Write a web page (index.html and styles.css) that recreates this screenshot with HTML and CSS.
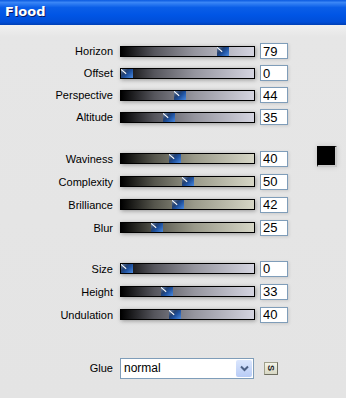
FILE: index.html
```html
<!DOCTYPE html>
<html lang="en">
<head>
    <meta charset="UTF-8">
    <title>Flood</title>
    <link rel="stylesheet" href="styles.css">
</head>
<body>
    <div class="titlebar">Flood</div>
    <div class="panel">
        <div class="group first">
            <div class="row"><span class="label">Horizon</span><div class="slider cool"><i class="thumb" style="--v:79"></i></div><input class="num" value="79"></div>
            <div class="row"><span class="label">Offset</span><div class="slider cool"><i class="thumb" style="--v:0"></i></div><input class="num" value="0"></div>
            <div class="row"><span class="label">Perspective</span><div class="slider cool"><i class="thumb" style="--v:44"></i></div><input class="num" value="44"></div>
            <div class="row"><span class="label">Altitude</span><div class="slider cool"><i class="thumb" style="--v:35"></i></div><input class="num" value="35"></div>
        </div>
        <div class="group second">
            <div class="row tall"><span class="label">Waviness</span><div class="slider warm"><i class="thumb" style="--v:40"></i></div><input class="num" value="40"><span class="swatch"></span></div>
            <div class="row tall"><span class="label">Complexity</span><div class="slider warm"><i class="thumb" style="--v:50"></i></div><input class="num" value="50"></div>
            <div class="row tall"><span class="label">Brilliance</span><div class="slider warm"><i class="thumb" style="--v:42"></i></div><input class="num" value="42"></div>
            <div class="row tall"><span class="label">Blur</span><div class="slider warm"><i class="thumb" style="--v:25"></i></div><input class="num" value="25"></div>
        </div>
        <div class="group third">
            <div class="row tall"><span class="label">Size</span><div class="slider cool"><i class="thumb" style="--v:0"></i></div><input class="num" value="0"></div>
            <div class="row tall"><span class="label">Height</span><div class="slider cool"><i class="thumb" style="--v:33"></i></div><input class="num" value="33"></div>
            <div class="row tall"><span class="label">Undulation</span><div class="slider cool"><i class="thumb" style="--v:40"></i></div><input class="num" value="40"></div>
        </div>
        <div class="row glue">
            <span class="label">Glue</span>
            <div class="select">
                <span class="select-text">normal</span>
                <span class="select-btn">
                    <svg width="9" height="7" viewBox="0 0 9 7"><path d="M1 1.5 L4.5 5 L8 1.5" fill="none" stroke="#4d6185" stroke-width="2"/></svg>
                </span>
            </div>
            <button class="sbtn"><span>S</span></button>
        </div>
    </div>
</body>
</html>
```

FILE: styles.css
```css
body {
    margin: 0;
    width: 346px;
    height: 398px;
    background: #e4e4e4;
    font-family: "Liberation Sans", Arial, sans-serif;
    font-size: 11px;
    color: #000;
    overflow: hidden;
}
.titlebar {
    height: 25px;
    line-height: 24px;
    padding-left: 5px;
    color: #fff;
    font-weight: bold;
    font-size: 13px;
    font-family: "DejaVu Sans", "Liberation Sans", sans-serif;
    text-shadow: 1px 1px 0 #0a1a66;
    background: linear-gradient(#0a5ae0 0%, #3a86f6 10%, #0a5ee8 30%, #0055e5 60%, #004ed8 88%, #003fb5 100%);
}
.panel {
    background: linear-gradient(#f0f0f0 0, #e6e6e6 12px, #e4e4e4 100%);
    height: 373px;
}
.group.first {
    padding-top: 15px;
}
.group.second {
    margin-top: 19px;
}
.group.third {
    margin-top: 18px;
}
.row {
    display: flex;
    align-items: center;
    height: 22px;
}
.row.tall {
    height: 23px;
}
.label {
    width: 113px;
    text-align: right;
    flex: none;
}
.slider {
    position: relative;
    box-sizing: border-box;
    width: 135px;
    height: 11px;
    margin-left: 7px;
    border: 1px solid #000;
    box-shadow: 1px 1px 4px rgba(0, 0, 0, 0.35);
}
.slider.cool {
    background: linear-gradient(to right, #000 0%, #55555c 25%, #95959e 55%, #d4d4e0 100%);
}
.slider.warm {
    background: linear-gradient(to right, #000 0%, #55554c 25%, #9a9a8a 55%, #d6d6c6 100%);
}
.thumb {
    position: absolute;
    top: 0;
    left: calc((100% - 12px) * var(--v) / 100);
    width: 12px;
    height: 9px;
    overflow: hidden;
    background: linear-gradient(135deg, #6f86a8 0%, #24406e 35%, #1d4f9c 55%, #4a8ae0 100%);
}
.thumb::before {
    content: "";
    position: absolute;
    left: -1px;
    top: 2px;
    width: 7px;
    height: 1px;
    background: #fff;
    transform: rotate(40deg);
}
.num {
    box-sizing: border-box;
    width: 28px;
    height: 16px;
    margin: 0 0 0 5px;
    padding: 0 0 0 2px;
    border: 1px solid #7f9db9;
    background: #fff;
    font-family: "Liberation Sans", Arial, sans-serif;
    font-size: 13px;
    color: #000;
    box-shadow: 1px 1px 3px rgba(0, 0, 0, 0.12);
}
.swatch {
    box-sizing: border-box;
    width: 20px;
    height: 21px;
    margin-left: 29px;
    margin-top: -4px;
    background: #000;
    border: 1px solid #000;
    border-right: 2px solid #c8c8c8;
    border-bottom: 2px solid #c8c8c8;
    box-shadow: 0 0 5px rgba(0, 0, 0, 0.15);
}
.row.glue {
    margin-top: 31px;
}
.select {
    display: flex;
    box-sizing: border-box;
    width: 134px;
    height: 21px;
    margin-left: 7px;
    border: 1px solid #7f9db9;
    background: #fff;
}
.select-text {
    flex: 1;
    padding-left: 3px;
    line-height: 19px;
    font-size: 12px;
}
.select-btn {
    display: flex;
    align-items: center;
    justify-content: center;
    width: 16px;
    margin: 1px;
    border-radius: 2px;
    background: linear-gradient(#dbe6fd, #b8ccf6);
}
.sbtn {
    display: flex;
    align-items: center;
    justify-content: center;
    box-sizing: border-box;
    width: 14px;
    height: 13px;
    margin-left: 10px;
    padding: 0;
    border: 1px solid #a0a08c;
    border-right-color: #6e6e60;
    border-bottom-color: #6e6e60;
    background: linear-gradient(#f4f4e8, #d8d8c4);
    font-family: "Liberation Sans", Arial, sans-serif;
    font-size: 9px;
    font-weight: bold;
    color: #222;
}
.sbtn span {
    display: block;
    transform: rotate(90deg);
}
```
